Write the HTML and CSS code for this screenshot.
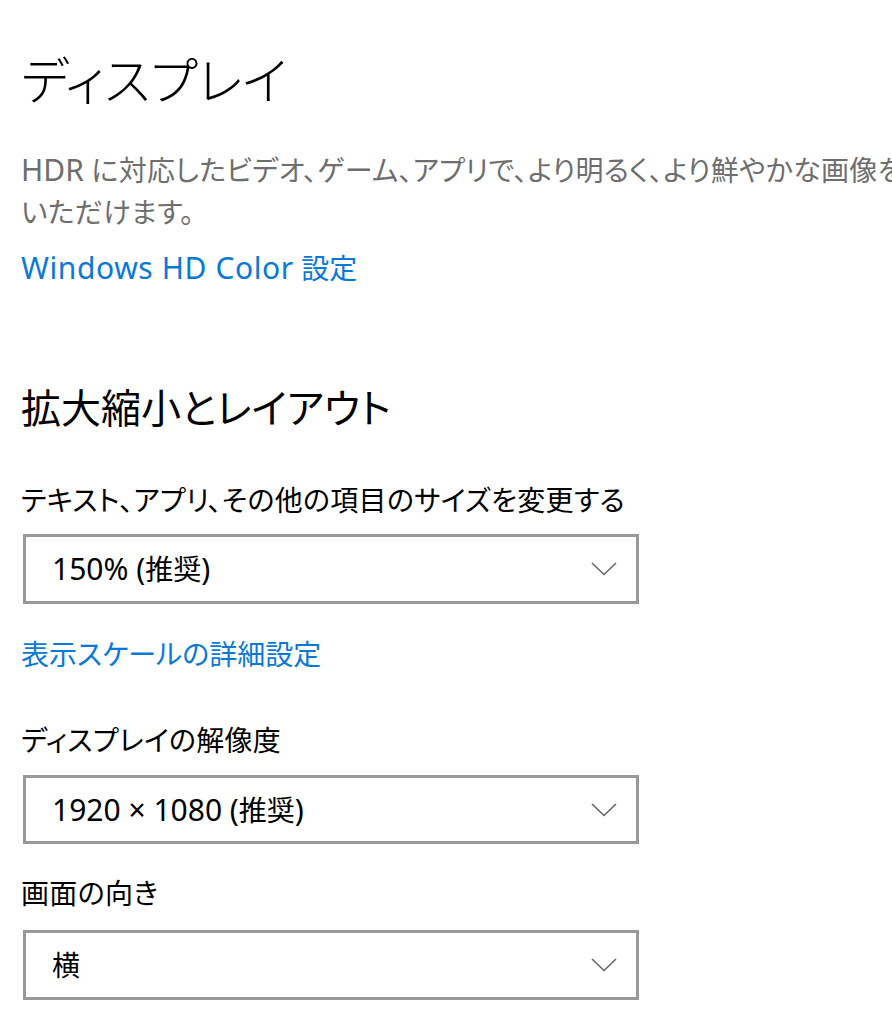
FILE: index.html
```html
<!DOCTYPE html>
<html lang="ja">
<head>
<meta charset="utf-8">
<title>ディスプレイ</title>
<link rel="stylesheet" href="styles.css">
</head>
<body>
<main class="page">
  <h1 class="title">ディスプレイ</h1>
  <p class="desc"><span class="lat">HDR</span> に対応したビデオ、ゲーム、アプリで、より明るく、より鮮やかな画像を<br>いただけます。</p>
  <a class="link link-hdr" href="#"><span class="lat lat-wide">Windows HD Color</span> 設定</a>

  <h2 class="subtitle">拡大縮小とレイアウト</h2>

  <div class="label label-scale">テキスト、アプリ、その他の項目のサイズを変更する</div>
  <div class="select select-scale">
    <span class="select-value"><span class="lat">150% (</span>推奨<span class="lat">)</span></span>
    <svg class="chevron" width="26" height="14" viewBox="0 0 26 14"><polyline points="1,1 13,12.5 25,1" fill="none" stroke="#666" stroke-width="1.6"/></svg>
  </div>

  <a class="link link-scale" href="#">表示スケールの詳細設定</a>

  <div class="label label-res">ディスプレイの解像度</div>
  <div class="select select-res">
    <span class="select-value"><span class="lat">1920 × 1080 (</span>推奨<span class="lat">)</span></span>
    <svg class="chevron" width="26" height="14" viewBox="0 0 26 14"><polyline points="1,1 13,12.5 25,1" fill="none" stroke="#666" stroke-width="1.6"/></svg>
  </div>

  <div class="label label-orient">画面の向き</div>
  <div class="select select-orient">
    <span class="select-value">横</span>
    <svg class="chevron" width="26" height="14" viewBox="0 0 26 14"><polyline points="1,1 13,12.5 25,1" fill="none" stroke="#666" stroke-width="1.6"/></svg>
  </div>
</main>
</body>
</html>
```
FILE: styles.css
```css
html, body {
  margin: 0;
  padding: 0;
  background: #ffffff;
  overflow: hidden;
}

body {
  font-family: "Noto Sans", "Noto Sans CJK JP", sans-serif;
  font-feature-settings: "palt";
  color: #000;
}

.page {
  display: flex;
  flex-direction: column;
  align-items: flex-start;
  padding-left: 21px;
  width: 1000px;
}

.lat {
  font-size: 30px;
  letter-spacing: 0;
}

.lat-wide {
  letter-spacing: 0.6px;
}

.title {
  margin: 0;
  padding-top: 42px;
  font-size: 51px;
  line-height: 76px;
  font-weight: 300;
}

.desc {
  margin: 31px 0 0;
  font-size: 28px;
  line-height: 42px;
  letter-spacing: 0.3px;
  color: #6e6e6e;
  white-space: nowrap;
}

.link {
  display: block;
  font-size: 28px;
  line-height: 42px;
  color: #0a78d7;
  text-decoration: none;
}

.link-hdr { margin-top: 14px; }

.subtitle {
  margin: 91px 0 0;
  font-size: 40px;
  line-height: 56px;
  font-weight: 400;
}

.label {
  font-size: 28px;
  line-height: 42px;
  letter-spacing: 0.3px;
}

.label-scale { margin-top: 43px; }
.label-res { margin-top: 44px; }
.label-orient { margin-top: 28px; }

.select {
  box-sizing: border-box;
  width: 616px;
  height: 70px;
  margin-left: 2px;
  border: 3px solid #999;
  display: flex;
  align-items: center;
  justify-content: space-between;
  padding: 0 19px 0 26px;
  font-size: 28px;
  line-height: 42px;
}

.select-scale { margin-top: 13px; }
.select-res { margin-top: 14px; height: 69px; }
.select-orient { margin-top: 16px; }

.link-scale { margin-top: 29px; }

.chevron { display: block; }
```
